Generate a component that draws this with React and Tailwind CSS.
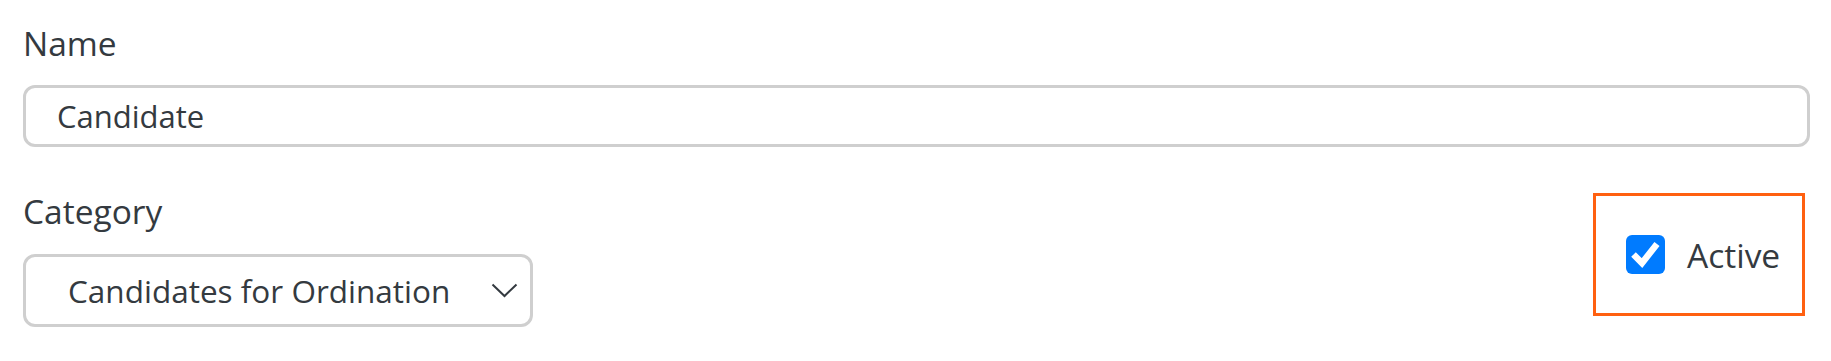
import { useState } from 'react';

const font = { fontFamily: '"Open Sans", "Noto Sans", sans-serif' };

function Chevron() {
  return (
    <svg width="27" height="15" viewBox="0 0 27 15" fill="none" className="shrink-0">
      <path d="M1.5 1.5 L13.5 13 L25.5 1.5" stroke="#343a40" strokeWidth="2" />
    </svg>
  );
}

function CheckBox({ checked, onChange }) {
  return (
    <button
      type="button"
      onClick={onChange}
      className={`w-[39px] h-[39px] rounded-[6px] flex items-center justify-center shrink-0 ${checked ? 'bg-[#007bff]' : 'bg-white border-2 border-[#adb5bd]'}`}
    >
      {checked && (
        <svg width="39" height="39" viewBox="0 0 39 39" fill="none">
          <path d="M7.5 19.5 L16 28 L31 9" stroke="#ffffff" strokeWidth="6.5" />
        </svg>
      )}
    </button>
  );
}

export default function App() {
  const [name, setName] = useState('Candidate');
  const [active, setActive] = useState(true);

  return (
    <div className="w-full min-h-[361px] bg-white text-[#343a40] pl-[23px] pr-[21px] pt-[23px]" style={font}>
      {/* Name */}
      <label className="block text-[33.5px] leading-[40px]">Name</label>
      <input
        value={name}
        onChange={(e) => setName(e.target.value)}
        className="mt-[22px] block w-full h-[62px] border-[3px] border-[#cfcfcf] rounded-[12px] pl-[31px] text-[31px] text-[#343a40] outline-none bg-white"
        style={font}
      />

      {/* Category + Active */}
      <div className="flex items-start justify-between mt-[44px]">
        <div className="flex flex-col">
          <label className="block text-[33.5px] leading-[40px]">Category</label>
          <button
            type="button"
            className="mt-[23px] w-[510px] h-[73px] border-[3px] border-[#cfcfcf] rounded-[12px] pl-[42px] pr-[12px] flex items-center justify-between bg-white text-[31.5px] text-[#343a40]"
          >
            <span>Candidates for Ordination</span>
            <Chevron />
          </button>
        </div>

        <div className="mt-[2px] mr-[5px] w-[212px] h-[123px] border-[3px] border-[#ff6010] flex items-center pl-[30px]">
          <CheckBox checked={active} onChange={() => setActive(!active)} />
          <span className="ml-[22px] text-[33.5px] leading-[40px]">Active</span>
        </div>
      </div>
    </div>
  );
}
